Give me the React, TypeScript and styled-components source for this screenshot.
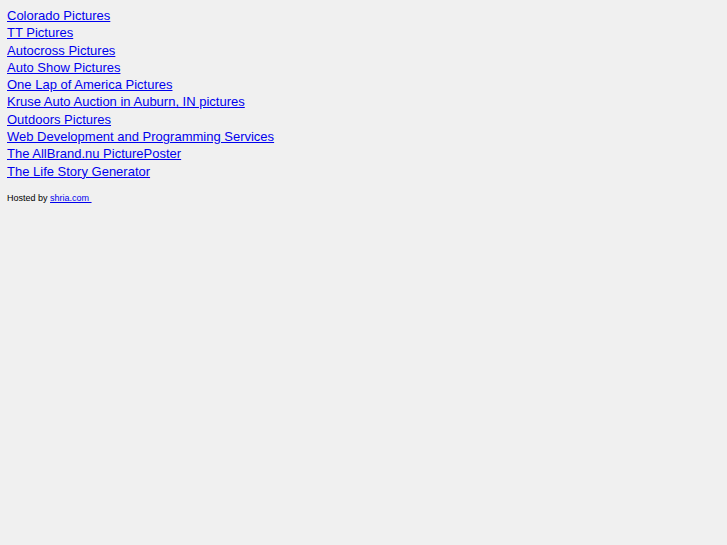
import React from "react";
import styled, { createGlobalStyle } from "styled-components";

const Global = createGlobalStyle`
  html, body { background: #f0f0f0; }
  body { margin: 7px; font-family: "Liberation Sans", Arial, sans-serif; font-size: 13px; color: #000; }
`;

const List = styled.div`
  display: flex;
  flex-direction: column;
  align-items: flex-start;
  line-height: 17.3px;
`;

const Link = styled.a`
  color: #0000ee;
  text-decoration: underline;
`;

const Footer = styled.div`
  margin-top: 13px;
  font-size: 9px;
  line-height: 11px;
`;

const links = [
  "Colorado Pictures",
  "TT Pictures",
  "Autocross Pictures",
  "Auto Show Pictures",
  "One Lap of America Pictures",
  "Kruse Auto Auction in Auburn, IN pictures",
  "Outdoors Pictures",
  "Web Development and Programming Services",
  "The AllBrand.nu PicturePoster",
  "The Life Story Generator",
];

export default function App() {
  return (
    <>
      <Global />
      <List>
        {links.map((l) => (
          <Link key={l} href="#">
            {l}
          </Link>
        ))}
      </List>
      <Footer>
        Hosted by <Link href="#">shria.com&nbsp;</Link>
      </Footer>
    </>
  );
}
